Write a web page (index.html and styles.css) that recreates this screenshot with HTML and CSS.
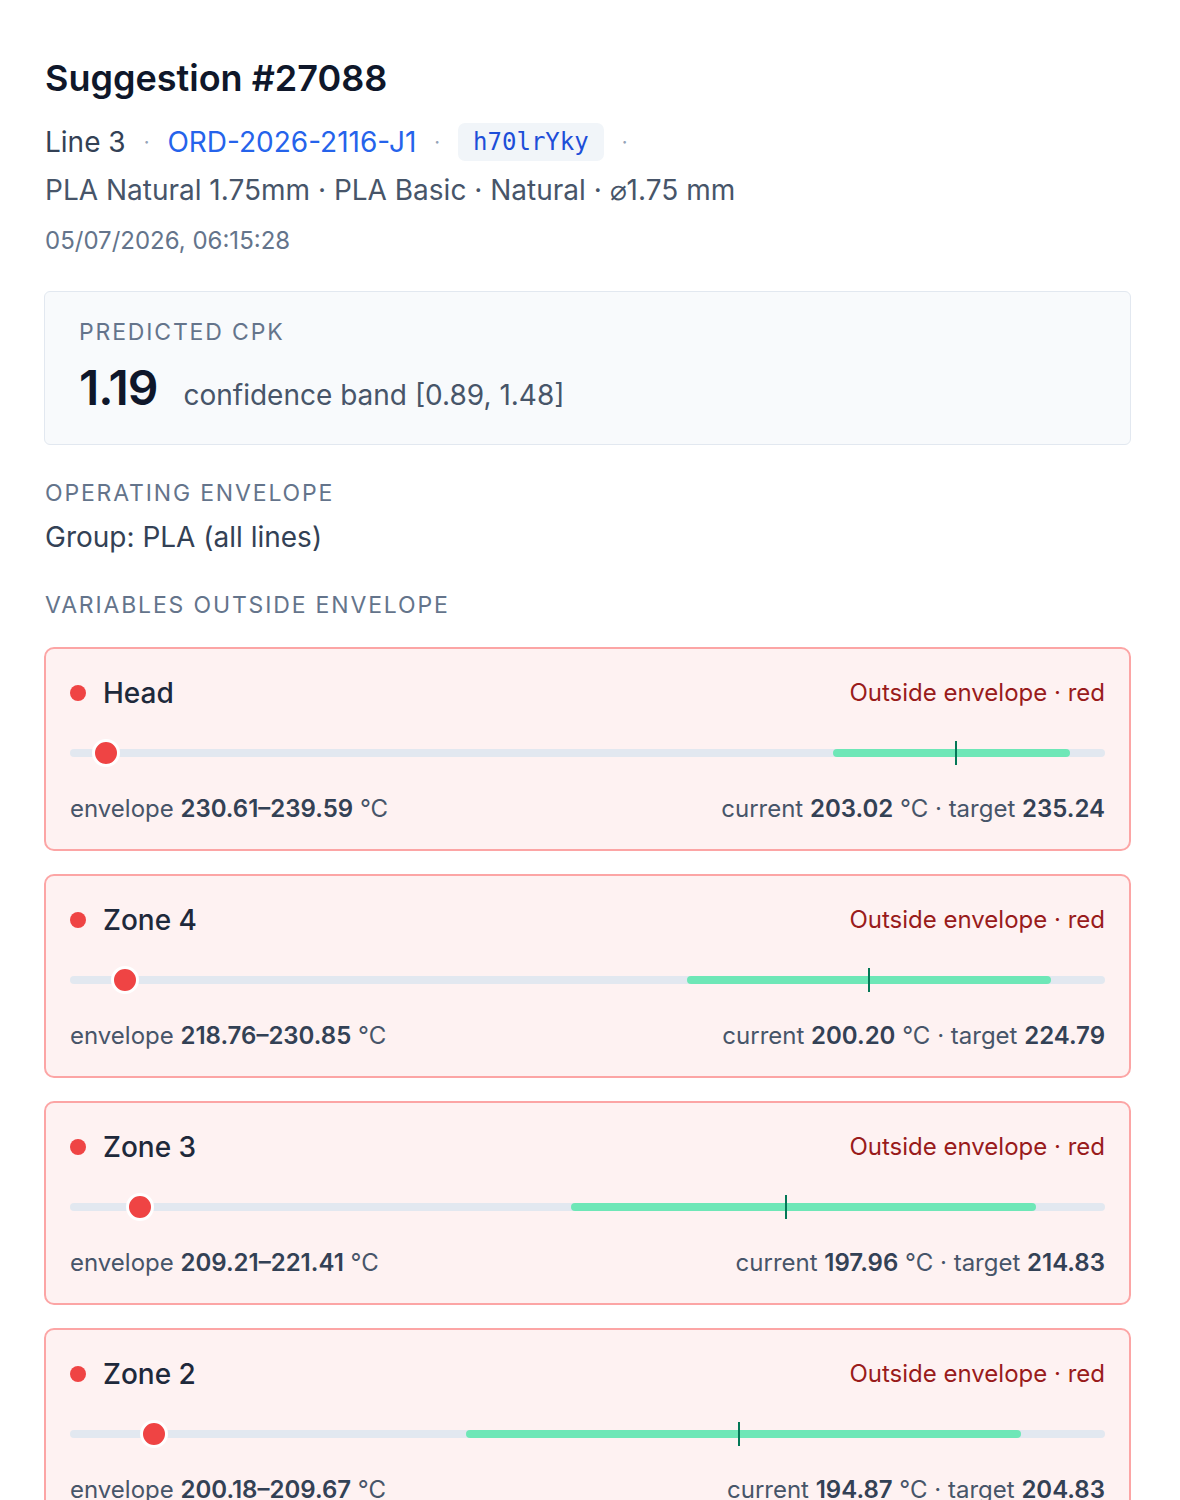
FILE: index.html
```html
<!DOCTYPE html>
<html lang="en">
<head>
    <meta charset="UTF-8">
    <title>Suggestion #27088</title>
    <link rel="stylesheet" href="styles.css">
</head>
<body>
    <div class="page">
        <h1>Suggestion #27088</h1>
        <div class="meta">
            <span>Line 3</span>
            <span class="sep">·</span>
            <a class="order" href="#">ORD-2026-2116-J1</a>
            <span class="sep">·</span>
            <code class="batch">h70lrYky</code>
            <span class="sep">·</span>
        </div>
        <div class="material">PLA Natural 1.75mm · PLA Basic · Natural · ⌀1.75 mm</div>
        <div class="date">05/07/2026, 06:15:28</div>

        <div class="cpk">
            <div class="label">Predicted Cpk</div>
            <div class="cpk-row">
                <span class="cpk-value">1.19</span>
                <span class="cpk-band">confidence band [0.89, 1.48]</span>
            </div>
        </div>

        <div class="label section">Operating envelope</div>
        <div class="group">Group: PLA (all lines)</div>

        <div class="label section vars">Variables outside envelope</div>

        <div class="cards">
            <div class="card">
                <div class="card-head">
                    <span class="dot"></span>
                    <span class="name">Head</span>
                    <span class="status">Outside envelope · red</span>
                </div>
                <div class="track">
                    <div class="rail"></div>
                    <div class="band" style="left: 73.7%; width: 22.9%"></div>
                    <div class="tick" style="left: 85.6%"></div>
                    <div class="marker" style="left: 3.5%"></div>
                </div>
                <div class="card-foot">
                    <span>envelope <b>230.61–239.59</b> °C</span>
                    <span>current <b>203.02</b> °C · target <b>235.24</b></span>
                </div>
            </div>

            <div class="card">
                <div class="card-head">
                    <span class="dot"></span>
                    <span class="name">Zone 4</span>
                    <span class="status">Outside envelope · red</span>
                </div>
                <div class="track">
                    <div class="rail"></div>
                    <div class="band" style="left: 59.6%; width: 35.2%"></div>
                    <div class="tick" style="left: 77.2%"></div>
                    <div class="marker" style="left: 5.3%"></div>
                </div>
                <div class="card-foot">
                    <span>envelope <b>218.76–230.85</b> °C</span>
                    <span>current <b>200.20</b> °C · target <b>224.79</b></span>
                </div>
            </div>

            <div class="card">
                <div class="card-head">
                    <span class="dot"></span>
                    <span class="name">Zone 3</span>
                    <span class="status">Outside envelope · red</span>
                </div>
                <div class="track">
                    <div class="rail"></div>
                    <div class="band" style="left: 48.4%; width: 44.9%"></div>
                    <div class="tick" style="left: 69.2%"></div>
                    <div class="marker" style="left: 6.8%"></div>
                </div>
                <div class="card-foot">
                    <span>envelope <b>209.21–221.41</b> °C</span>
                    <span>current <b>197.96</b> °C · target <b>214.83</b></span>
                </div>
            </div>

            <div class="card">
                <div class="card-head">
                    <span class="dot"></span>
                    <span class="name">Zone 2</span>
                    <span class="status">Outside envelope · red</span>
                </div>
                <div class="track">
                    <div class="rail"></div>
                    <div class="band" style="left: 38.3%; width: 53.6%"></div>
                    <div class="tick" style="left: 64.6%"></div>
                    <div class="marker" style="left: 8.1%"></div>
                </div>
                <div class="card-foot">
                    <span>envelope <b>200.18–209.67</b> °C</span>
                    <span>current <b>194.87</b> °C · target <b>204.83</b></span>
                </div>
            </div>
        </div>
    </div>
</body>
</html>
```

FILE: styles.css
```css
body {
    margin: 0;
    font-family: Inter, "Noto Sans", sans-serif;
    background: #fff;
    color: #334155;
}

.page {
    padding: 56px 49px 40px 44px;
}

h1 {
    margin: 0 0 0 1px;
    font-size: 36px;
    line-height: 44px;
    font-weight: 600;
    color: #0f172a;
}

.meta {
    display: flex;
    align-items: center;
    gap: 18px;
    margin-top: 22px;
    margin-left: 1px;
    font-size: 28px;
    line-height: 40px;
    color: #334155;
}

.sep {
    color: #94a3b8;
    font-size: 20px;
}

.order {
    color: #2563eb;
    text-decoration: none;
}

.batch {
    font-family: "DejaVu Sans Mono", monospace;
    font-size: 24px;
    line-height: 38px;
    color: #1d4ed8;
    background: #f1f5f9;
    padding: 0 15px;
    border-radius: 7px;
}

.material {
    margin: 8px 0 0 1px;
    font-size: 28px;
    line-height: 40px;
    color: #475569;
}

.date {
    margin: 15px 0 0 1px;
    font-size: 24px;
    line-height: 32px;
    color: #64748b;
}

.cpk {
    margin-top: 34px;
    background: #f8fafc;
    border: 1px solid #e2e8f0;
    border-radius: 6px;
    padding: 24px 33px 21px 34px;
}

.label {
    font-size: 23px;
    line-height: 32px;
    letter-spacing: 0.08em;
    text-transform: uppercase;
    color: #64748b;
}

.cpk-row {
    display: flex;
    align-items: baseline;
    gap: 26px;
    margin-top: 12px;
    line-height: 56px;
}

.cpk-value {
    font-size: 48px;
    font-weight: 600;
    letter-spacing: -0.02em;
    color: #0f172a;
}

.cpk-band {
    font-size: 28px;
    color: #475569;
}

.section {
    margin-top: 32px;
    margin-left: 1px;
}

.group {
    margin: 8px 0 0 1px;
    font-size: 28px;
    line-height: 40px;
    color: #334155;
}

.vars {
    margin-top: 32px;
}

.cards {
    display: flex;
    flex-direction: column;
    gap: 23px;
    margin-top: 26px;
}

.card {
    background: #fef2f2;
    border: 2px solid #fca5a5;
    border-radius: 10px;
    padding: 24px 24px 25px;
}

.card-head {
    display: flex;
    align-items: center;
    line-height: 40px;
}

.dot {
    width: 16px;
    height: 16px;
    border-radius: 50%;
    background: #ef4444;
    margin-right: 17px;
}

.name {
    font-size: 28px;
    font-weight: 500;
    color: #1e293b;
}

.status {
    margin-left: auto;
    font-size: 24px;
    color: #991b1b;
}

.track {
    position: relative;
    height: 28px;
    margin-top: 26px;
}

.rail {
    position: absolute;
    left: 0;
    right: 0;
    top: 10px;
    height: 8px;
    border-radius: 4px;
    background: #e2e8f0;
}

.band {
    position: absolute;
    top: 10px;
    height: 8px;
    border-radius: 4px;
    background: #6ee7b7;
}

.tick {
    position: absolute;
    top: 2px;
    width: 2px;
    height: 24px;
    margin-left: -1px;
    background: #047857;
}

.marker {
    position: absolute;
    top: 0;
    width: 22px;
    height: 22px;
    margin-left: -14px;
    border-radius: 50%;
    background: #ef4444;
    border: 3px solid #fff;
}

.card-foot {
    display: flex;
    justify-content: space-between;
    margin-top: 27px;
    font-size: 24px;
    line-height: 30px;
    color: #475569;
}

.card-foot b {
    font-weight: 600;
    color: #334155;
}
```
